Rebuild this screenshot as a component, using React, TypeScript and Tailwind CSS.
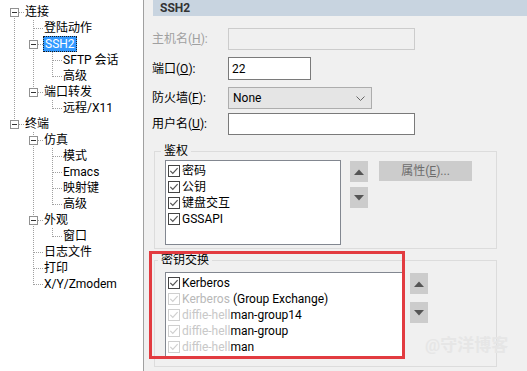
import React from "react";

type TNode = { label: string; children?: TNode[]; selected?: boolean };

const tree: TNode[] = [
  {
    label: "连接",
    children: [
      { label: "登陆动作" },
      { label: "SSH2", selected: true, children: [{ label: "SFTP 会话" }, { label: "高级" }] },
      { label: "端口转发", children: [{ label: "远程/X11" }] },
    ],
  },
  {
    label: "终端",
    children: [
      { label: "仿真", children: [{ label: "模式" }, { label: "Emacs" }, { label: "映射键" }, { label: "高级" }] },
      { label: "外观", children: [{ label: "窗口" }] },
      { label: "日志文件" },
      { label: "打印" },
      { label: "X/Y/Zmodem" },
    ],
  },
];

type Flat = { node: TNode; level: number; lasts: boolean[]; first: boolean };

function flatten(nodes: TNode[], level: number, lasts: boolean[], out: Flat[]) {
  nodes.forEach((n, i) => {
    const isLast = i === nodes.length - 1;
    const l = [...lasts, isLast];
    out.push({ node: n, level, lasts: l, first: level === 0 && i === 0 });
    if (n.children) flatten(n.children, level + 1, l, out);
  });
  return out;
}

const LINE = "#a0a0a0";

function Cell({ vFull, own, hasChildren, first, last }: { vFull?: boolean; own?: boolean; hasChildren?: boolean; first?: boolean; last?: boolean }) {
  return (
    <svg width="19" height="16" viewBox="0 0 19 16" className="shrink-0" shapeRendering="crispEdges">
      {vFull && <line x1="9.5" y1="0" x2="9.5" y2="16" stroke={LINE} strokeDasharray="1 1" />}
      {own && (
        <>
          {!first && <line x1="9.5" y1="0" x2="9.5" y2="8.5" stroke={LINE} strokeDasharray="1 1" />}
          {!last && <line x1="9.5" y1="8" x2="9.5" y2="16" stroke={LINE} strokeDasharray="1 1" />}
          <line x1="10" y1="8.5" x2="19" y2="8.5" stroke={LINE} strokeDasharray="1 1" />
          {hasChildren && (
            <>
              <rect x="5.5" y="4.5" width="8" height="8" fill="#fff" stroke="#919191" />
              <line x1="7" y1="8.5" x2="12" y2="8.5" stroke="#333" />
            </>
          )}
        </>
      )}
    </svg>
  );
}

function Tree() {
  const rows = flatten(tree, 0, [], []);
  return (
    <div className="pt-[4px]">
      {rows.map((r, idx) => {
        const cells = [];
        for (let i = 0; i < r.level; i++) {
          cells.push(<Cell key={i} vFull={!r.lasts[i]} />);
        }
        cells.push(
          <Cell key="own" own hasChildren={!!r.node.children} first={r.first} last={r.lasts[r.level]} />
        );
        return (
          <div key={idx} className="flex h-[16px] items-center pl-[5px]">
            {cells}
            {r.node.selected ? (
              <span className="h-[16px] bg-[#3399ff] px-[2px] leading-[16px] text-white outline-1 outline-dotted outline-[#1a1a1a] -outline-offset-1">
                {r.node.label}
              </span>
            ) : (
              <span className="pl-[1px] leading-[16px] text-black">{r.node.label}</span>
            )}
          </div>
        );
      })}
    </div>
  );
}

function Check({ faint }: { faint?: boolean }) {
  const c = faint ? "#cfcfcf" : "#444";
  return (
    <svg width="12" height="12" viewBox="0 0 12 12" className="shrink-0">
      <rect x="0.5" y="0.5" width="11" height="11" fill="#fff" stroke={c} />
      <path d="M2.3 5.8 L4.8 8.4 L9.6 3.2" fill="none" stroke={faint ? "#d0d0d0" : "#555"} strokeWidth="1.2" />
    </svg>
  );
}

function ArrowBtn({ up }: { up?: boolean }) {
  return (
    <div className="flex h-[21px] w-[18px] items-center justify-center bg-[#cccccc]">
      <svg width="10" height="6" viewBox="0 0 10 6">
        {up ? <path d="M0 6 L5 0.5 L10 6 Z" fill="#555" /> : <path d="M0 0 L5 5.5 L10 0 Z" fill="#555" />}
      </svg>
    </div>
  );
}

function Label({ children, disabled }: { children: React.ReactNode; disabled?: boolean }) {
  return <div className={"w-[76px] shrink-0 text-[12px] " + (disabled ? "text-[#a0a0a0]" : "text-black")}>{children}</div>;
}

export default function App() {
  return (
    <div
      className="relative flex h-[371px] w-[527px] overflow-hidden bg-[#f0f0f0] text-[11.5px] leading-[16px]"
      style={{ fontFamily: 'Roboto, "Noto Sans CJK SC", sans-serif' }}
    >
      <div className="h-full w-[144px] shrink-0 border-r border-[#a0a0a0] bg-white text-[12px]">
        <Tree />
      </div>

      <div className="flex min-w-0 flex-1 flex-col pl-[8px]">
        <div className="ml-[1px] flex h-[16px] items-center bg-[#c8d4e0] pl-[7px] text-[12px] font-bold text-[#333]">SSH2</div>

        <div className="mt-[12px] flex items-center">
          <Label disabled>
            主机名(<span className="underline">H</span>):
          </Label>
          <div className="h-[22px] w-[187px] border border-[#cccccc] bg-[#f0f0f0]" />
        </div>

        <div className="mt-[7px] flex items-center">
          <Label>
            端口(<span className="underline">O</span>):
          </Label>
          <div className="flex h-[23px] w-[83px] items-center border border-[#7a7a7a] bg-white pl-[3px] text-[12px]">22</div>
        </div>

        <div className="mt-[7px] flex items-center">
          <Label>
            防火墙(<span className="underline">F</span>):
          </Label>
          <div className="flex h-[22px] w-[144px] items-center justify-between border border-[#adadad] bg-[#e5e5e5] pl-[4px] pr-[6px] text-[12px]">
            <span>None</span>
            <svg width="9" height="5" viewBox="0 0 9 5">
              <path d="M0.5 0.5 L4.5 4.5 L8.5 0.5" fill="none" stroke="#666" />
            </svg>
          </div>
        </div>

        <div className="mt-[4px] flex items-center">
          <Label>
            用户名(<span className="underline">U</span>):
          </Label>
          <div className="h-[22px] w-[187px] border border-[#7a7a7a] bg-white" />
        </div>

        {/* 鉴权 */}
        <div className="relative ml-[2px] mt-[16px] h-[98px] w-[343px] border border-[#dcdcdc]">
          <span className="absolute -top-[9px] left-[6px] bg-[#f0f0f0] px-[3px] text-[12px]">鉴权</span>
          <div className="flex pl-[10px] pt-[8px]">
            <div className="h-[85px] w-[176px] border border-[#828790] bg-white pl-[2px] pt-[2px] text-[12px]">
              {["密码", "公钥", "键盘交互", "GSSAPI"].map((t) => (
                <div key={t} className="flex h-[16px] items-center gap-[2px]">
                  <Check />
                  <span>{t}</span>
                </div>
              ))}
            </div>
            <div className="ml-[9px] mt-[1px] flex flex-col gap-[5px]">
              <ArrowBtn up />
              <ArrowBtn />
            </div>
            <div className="ml-[11px] mt-[1px] flex h-[20px] w-[93px] items-center justify-center bg-[#cccccc] text-[12px] text-[#6d6d6d]">
              属性(<span className="underline">E</span>)...
            </div>
          </div>
        </div>

        {/* 密钥交换 */}
        <div className="relative ml-[2px] mt-[11px] h-[107px] w-[343px] border border-[#dcdcdc]">
          <span className="absolute -top-[9px] left-[3px] bg-[#f0f0f0] px-[3px] text-[12px]">密钥交换</span>
          <div className="flex pl-[10px] pt-[11px]">
            <div className="h-[86px] w-[238px] border border-[#828790] bg-white pl-[2px] pt-[2px] text-[12px]">
              <div className="flex h-[16px] items-center gap-[2px]">
                <Check />
                <span>Kerberos</span>
              </div>
              <div className="flex h-[16px] items-center gap-[2px]">
                <Check faint />
                <span>
                  <span className="text-[#b8b8b8]">Kerberos</span> (Group Exchange)
                </span>
              </div>
              <div className="flex h-[16px] items-center gap-[2px]">
                <Check faint />
                <span>
                  <span className="text-[#c8c8c8]">diffie-hell</span>man-group14
                </span>
              </div>
              <div className="flex h-[16px] items-center gap-[2px]">
                <Check faint />
                <span>
                  <span className="text-[#c8c8c8]">diffie-hell</span>man-group
                </span>
              </div>
              <div className="flex h-[16px] items-center gap-[2px]">
                <Check faint />
                <span>
                  <span className="text-[#c8c8c8]">diffie-hell</span>man
                </span>
              </div>
            </div>
            <div className="ml-[7px] mt-[1px] flex flex-col gap-[8px]">
              <ArrowBtn up />
              <ArrowBtn />
            </div>
          </div>
        </div>
      </div>

      {/* red highlight */}
      <div className="pointer-events-none absolute left-[149px] top-[251px] h-[108px] w-[256px] border-[3px] border-[#e23b40]" />
      {/* watermark */}
      <div className="pointer-events-none absolute left-[425px] top-[334px] text-[17px] font-bold leading-[22px] text-[#e6e6e6]">
        @守洋博客
      </div>
    </div>
  );
}
